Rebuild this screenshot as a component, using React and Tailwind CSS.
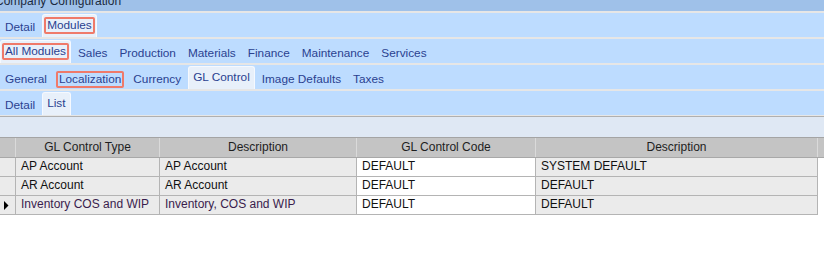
import React from "react";
import clsx from "clsx";

const tabRows = [
  { tabs: ["Detail", "Modules"], selected: 1, focus: 1 },
  {
    tabs: ["All Modules", "Sales", "Production", "Materials", "Finance", "Maintenance", "Services"],
    selected: 0,
    focus: 0,
  },
  {
    tabs: ["General", "Localization", "Currency", "GL Control", "Image Defaults", "Taxes"],
    selected: 3,
    focus: 1,
  },
  { tabs: ["Detail", "List"], selected: 1, focus: -1 },
];

const columns = [
  { label: "", width: "w-[16px]" },
  { label: "GL Control Type", width: "w-[144px]" },
  { label: "Description", width: "w-[197px]" },
  { label: "GL Control Code", width: "w-[179px]" },
  { label: "Description", width: "w-[282px]" },
];

const rows = [
  ["AP Account", "AP Account", "DEFAULT", "SYSTEM DEFAULT"],
  ["AR Account", "AR Account", "DEFAULT", "DEFAULT"],
  ["Inventory COS and WIP", "Inventory, COS and WIP", "DEFAULT", "DEFAULT"],
];

const Tab = ({ label, selected, focus }) => (
  <div
    className={clsx(
      "mx-[1px]",
      selected
        ? "mt-[1px] h-[23px] px-[1px] pt-[2px] bg-[#e8f0fa] border border-b-0 border-[#f6f9fe] rounded-t-[3px]"
        : "px-[2px] pt-[6px]"
    )}
  >
    <span
      className={clsx(
        "block border-2 rounded-[2px] px-[1px] text-[11.8px] leading-[13px] whitespace-nowrap text-[#2a4190]",
        focus ? "border-[#ef7a6a]" : "border-transparent"
      )}
    >
      {label}
    </span>
  </div>
);

const TabRow = ({ tabs, selected, focus }) => (
  <div className="h-[24px] bg-[#bddcff]">
    <div className="flex items-start -ml-[1px]">
      {tabs.map((t, i) => (
        <Tab key={t} label={t} selected={i === selected} focus={i === focus} />
      ))}
    </div>
  </div>
);

const App = () => {
  return (
    <div className="w-[824px] h-[254px] bg-white overflow-hidden font-['Liberation_Sans',Arial,sans-serif]">
      {/* window title, cut off at top */}
      <div className="h-[11px] bg-[#9fc1e9] overflow-hidden">
        <div className="-mt-[6px] -ml-[5px] text-[12px] leading-[14px] text-[#1b2a40] whitespace-nowrap">
          Company Configuration
        </div>
      </div>

      {tabRows.map((r, i) => (
        <React.Fragment key={i}>
          <div className="h-[2px] bg-[#e6e6e6]" />
          <TabRow {...r} />
        </React.Fragment>
      ))}

      <div className="h-[1px] bg-[#e6e6e6]" />
      <div className="h-[1px] bg-[#b0b0b0]" />
      <div className="h-[21px] bg-[#dfe8f4] border-b border-[#a4a4a4]" />

      {/* grid header */}
      <div className="flex h-[20px] bg-[#c4c4c4] border-b border-[#a8a8a8] text-[12px] leading-[19px] text-[#1e1e1e]">
        {columns.map((c, i) => (
          <div key={i} className={clsx(c.width, "border-r border-[#dadada] text-center whitespace-nowrap")}>
            {c.label}
          </div>
        ))}
        <div className="flex-1" />
      </div>

      {/* grid rows */}
      {rows.map((r, ri) => {
        const current = ri === rows.length - 1;
        return (
          <div key={ri} className="flex h-[19px] text-[12px] leading-[15px]">
            <div className="w-[16px] bg-[#ebebeb] border-r border-b border-[#b4b4b4]">
              {current && (
                <svg width="5" height="9" className="ml-[4px] mt-[5px]">
                  <path d="M0 0 L4.5 4.5 L0 9 Z" fill="#000" />
                </svg>
              )}
            </div>
            {r.map((cell, ci) => (
              <div
                key={ci}
                className={clsx(
                  columns[ci + 1].width,
                  "pl-[5px] pt-[1px] border-r border-b border-[#b4b4b4] whitespace-nowrap overflow-hidden",
                  ci === 2 ? "bg-white" : "bg-[#ebebeb]",
                  current && ci < 2 ? "text-[#3a1d4d]" : "text-[#111]"
                )}
              >
                {cell}
              </div>
            ))}
          </div>
        );
      })}
    </div>
  );
};

export default App;
